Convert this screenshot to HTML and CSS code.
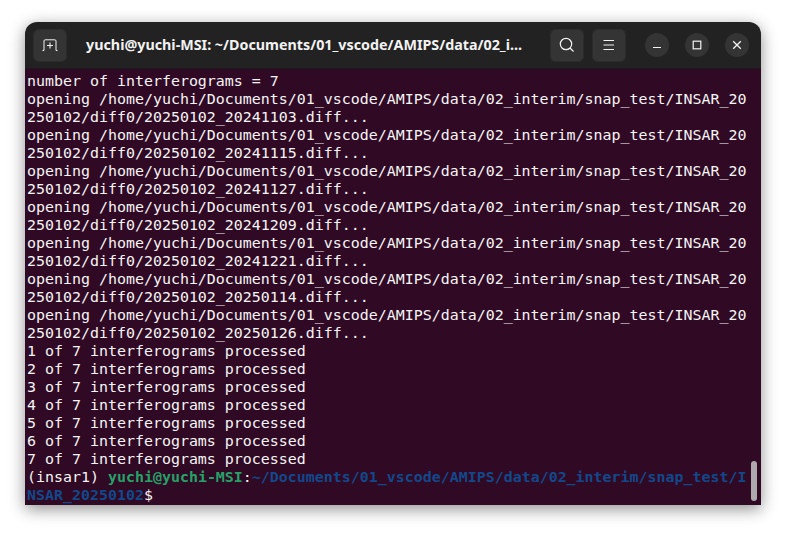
FILE: index.html
```html
<!DOCTYPE html>
<html lang="en">
<head>
<meta charset="utf-8">
<title>Terminal</title>
<link rel="stylesheet" href="styles.css">
</head>
<body>
<div class="window">
  <header class="titlebar">
    <button class="tool new-tab" aria-label="New tab">
      <svg width="16" height="12" viewBox="0 0 16 12"><path d="M0.500 11.500H2V2Q2 0.800 3.200 0.800H12.800Q14 0.800 14 2V11.500H15.500" fill="none" stroke="#f2f2f2" stroke-width="1"/><path d="M8 3.500V9.500M5 6.500H11" stroke="#f2f2f2" stroke-width="1.100"/></svg>
    </button>
    <div class="title">yuchi@yuchi-MSI: ~/Documents/01_vscode/AMIPS/data/02_i...</div>
    <div class="tools">
      <button class="tool" aria-label="Search">
        <svg width="16" height="16" viewBox="0 0 16 16"><circle cx="7" cy="7" r="5.700" fill="none" stroke="#f2f2f2" stroke-width="1.200"/><path d="M11 11L14.500 14.500" stroke="#f2f2f2" stroke-width="1.200"/></svg>
      </button>
      <button class="tool" aria-label="Menu">
        <svg width="12" height="12" viewBox="0 0 12 12"><path d="M0.500 1.500H11M0.500 6H11M0.500 10.500H11" stroke="#f2f2f2" stroke-width="1"/></svg>
      </button>
    </div>
    <div class="controls">
      <button class="round" aria-label="Minimize">
        <svg width="10" height="10" viewBox="0 0 10 10"><path d="M1 7.500H9" stroke="#f2f2f2" stroke-width="1"/></svg>
      </button>
      <button class="round" aria-label="Maximize">
        <svg width="10" height="10" viewBox="0 0 10 10"><rect x="1.200" y="1.200" width="7.600" height="7.600" fill="none" stroke="#f2f2f2" stroke-width="1.200"/></svg>
      </button>
      <button class="round" aria-label="Close">
        <svg width="10" height="10" viewBox="0 0 10 10"><path d="M1.200 1.200L8.800 8.800M8.800 1.200L1.200 8.800" stroke="#f2f2f2" stroke-width="1.300"/></svg>
      </button>
    </div>
  </header>
  <main class="terminal">
<pre class="output">number of interferograms = 7
opening /home/yuchi/Documents/01_vscode/AMIPS/data/02_interim/snap_test/INSAR_20
250102/diff0/20250102_20241103.diff...
opening /home/yuchi/Documents/01_vscode/AMIPS/data/02_interim/snap_test/INSAR_20
250102/diff0/20250102_20241115.diff...
opening /home/yuchi/Documents/01_vscode/AMIPS/data/02_interim/snap_test/INSAR_20
250102/diff0/20250102_20241127.diff...
opening /home/yuchi/Documents/01_vscode/AMIPS/data/02_interim/snap_test/INSAR_20
250102/diff0/20250102_20241209.diff...
opening /home/yuchi/Documents/01_vscode/AMIPS/data/02_interim/snap_test/INSAR_20
250102/diff0/20250102_20241221.diff...
opening /home/yuchi/Documents/01_vscode/AMIPS/data/02_interim/snap_test/INSAR_20
250102/diff0/20250102_20250114.diff...
opening /home/yuchi/Documents/01_vscode/AMIPS/data/02_interim/snap_test/INSAR_20
250102/diff0/20250102_20250126.diff...
1 of 7 interferograms processed
2 of 7 interferograms processed
3 of 7 interferograms processed
4 of 7 interferograms processed
5 of 7 interferograms processed
6 of 7 interferograms processed
7 of 7 interferograms processed
(insar1) <b class="green">yuchi@yuchi-MSI</b>:<b class="blue">~/Documents/01_vscode/AMIPS/data/02_interim/snap_test/I
NSAR_20250102</b>$</pre>
    <div class="scrollbar"></div>
  </main>
</div>
</body>
</html>
```
FILE: styles.css
```css
* { box-sizing: border-box; }
html, body { margin: 0; height: 100%; background: #fff; overflow: hidden; }
body { padding: 22px 25px 28px; }
.window {
  width: 736px;
  height: 483px;
  display: flex;
  flex-direction: column;
  border-radius: 12px 12px 0 0;
  overflow: hidden;
  box-shadow: 0 4px 16px rgba(0, 0, 0, 0.45);
}
.titlebar {
  height: 47px;
  flex: none;
  display: flex;
  align-items: center;
  padding: 0 12px 0 8px;
  background: #222222;
  border-bottom: 1px solid #1a1a1a;
}
button {
  display: flex;
  align-items: center;
  justify-content: center;
  padding: 0;
  border: 0;
  color: #f2f2f2;
}
.tool {
  width: 34px;
  height: 33px;
  border-radius: 6px;
  background: #343434;
  box-shadow: inset 0 0 0 1px #2c2c2c;
}
.title {
  flex: 1;
  padding-left: 19px;
  font: 700 14.300px/20px "Noto Sans", "Open Sans", sans-serif;
  color: #f2f2f2;
  white-space: nowrap;
}
.tools { display: flex; gap: 8px; }
.controls { display: flex; gap: 16px; margin-left: 19px; }
.round {
  width: 24px;
  height: 24px;
  border-radius: 50%;
  background: #343434;
}
.terminal {
  flex: 1;
  position: relative;
  background: #300a24;
  padding: 3px 2px 0 2px;
  min-height: 0;
}
.output {
  margin: 0;
  font-family: "DejaVu Sans Mono", monospace;
  font-size: 14.950px;
  line-height: 18px;
  color: #f6f4f5;
}
.green { color: #26a269; }
.blue { color: #12488b; }
.scrollbar {
  position: absolute;
  right: 4px;
  bottom: 4px;
  width: 6px;
  height: 40px;
  border-radius: 3px;
  background: #ada9ac;
}
```
